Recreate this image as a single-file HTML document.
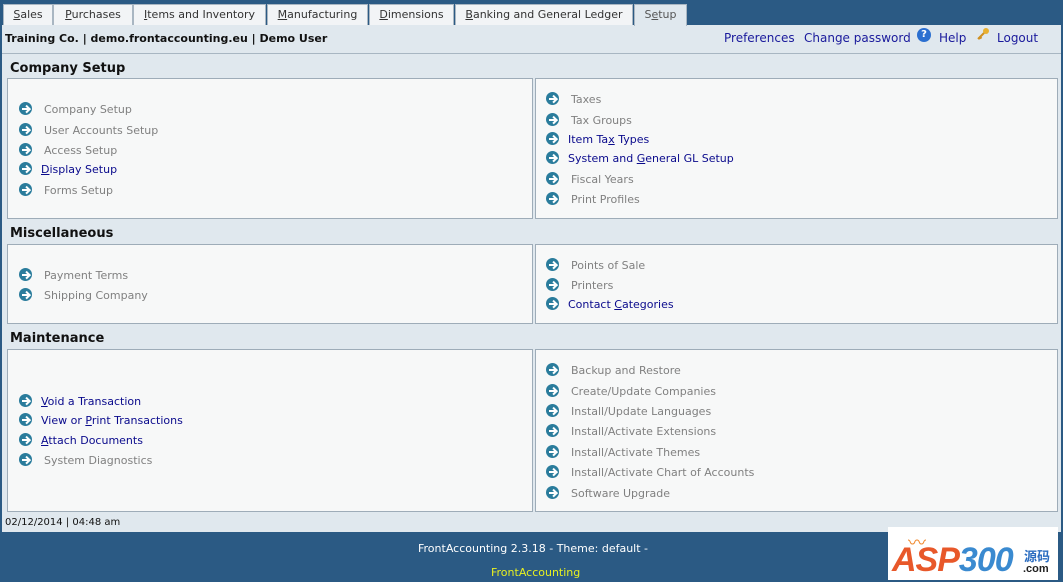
<!DOCTYPE html>
<html><head><meta charset="utf-8"><style>
body{margin:0;width:1063px;height:582px;background:#2b5a84;position:relative;overflow:hidden;font-family:"DejaVu Sans","Liberation Sans",sans-serif;font-size:11px}
.a{position:absolute;white-space:nowrap}
.tab{position:absolute;top:4px;height:21px;background:#f2f4f6;border:1px solid #a9b6c2;border-bottom:none;box-sizing:border-box;text-align:center;line-height:20px;color:#333;font-size:11px}
.tab.on{background:#e0e8ee;color:#555;height:22px}
#panel{position:absolute;left:2px;top:25px;width:1059px;height:507px;background:#e0e8ee}
.box{position:absolute;background:#f7f8f8;border:1px solid #9eacb8;box-sizing:border-box}
.h{position:absolute;left:10px;font-weight:bold;font-size:13px;color:#111}
.it{position:absolute;white-space:nowrap;color:#808080;font-size:11px;line-height:14px;margin-top:1px}
.it.l{color:#0a0a8c}
.ic{position:absolute;width:13px;height:13px;border-radius:50%;background:#2a7c9c}
.ic:after{content:"";position:absolute;left:3px;top:5.5px;width:6px;height:2px;background:#fff}
.ic:before{content:"";position:absolute;left:4.5px;top:3.5px;width:3.5px;height:3.5px;border-top:2px solid #fff;border-right:2px solid #fff;transform:rotate(45deg)}
u{text-decoration:underline}
</style></head><body>
<div id="panel"></div>
<div class="tab" style="left:3px;width:50px"><u>S</u>ales</div>
<div class="tab" style="left:53px;width:80px"><u>P</u>urchases</div>
<div class="tab" style="left:133px;width:133px"><u>I</u>tems and Inventory</div>
<div class="tab" style="left:267px;width:101px"><u>M</u>anufacturing</div>
<div class="tab" style="left:369px;width:85px"><u>D</u>imensions</div>
<div class="tab" style="left:455px;width:178px"><u>B</u>anking and General Ledger</div>
<div class="tab on" style="left:634px;width:53px">S<u>e</u>tup</div>

<div class="a" style="left:5px;top:32px;font-weight:bold;font-size:11px;color:#111">Training Co. | demo.frontaccounting.eu | Demo User</div>
<div class="a" style="left:724px;top:31px;color:#1a1a9c;font-size:12px">Preferences</div>
<div class="a" style="left:804px;top:31px;color:#1a1a9c;font-size:12px">Change password</div>
<div class="a" style="left:917px;top:28px;width:14px;height:14px;border-radius:50%;background:#2b6fd0;color:#fff;font-size:10px;font-weight:bold;text-align:center;line-height:14px">?</div>
<div class="a" style="left:939px;top:31px;color:#1a1a9c;font-size:12px">Help</div>
<div class="a" style="left:976px;top:27px;width:14px;height:14px">
<svg width="14" height="14" viewBox="0 0 14 14"><circle cx="10" cy="4" r="3" fill="#e8b030"/><path d="M8 6 L2 12 M4 10 L5.5 11.5 M3 11 L4 12" stroke="#d09020" stroke-width="2" fill="none"/></svg></div>
<div class="a" style="left:997px;top:31px;color:#1a1a9c;font-size:12px">Logout</div>
<div class="a" style="left:2px;top:53px;width:1059px;height:1px;background:#a8b6c2"></div>

<div class="h" style="top:61px">Company Setup</div>
<div class="box" style="left:7px;top:78px;width:526px;height:141px"></div>
<div class="box" style="left:535px;top:78px;width:523px;height:141px"></div>
<div class="h" style="top:226px">Miscellaneous</div>
<div class="box" style="left:7px;top:244px;width:526px;height:80px"></div>
<div class="box" style="left:535px;top:244px;width:523px;height:80px"></div>
<div class="h" style="top:331px">Maintenance</div>
<div class="box" style="left:7px;top:349px;width:526px;height:163px"></div>
<div class="box" style="left:535px;top:349px;width:523px;height:163px"></div>

<div class="ic" style="left:19px;top:102px"></div><div class="it" style="left:44px;top:102px">Company Setup</div>
<div class="ic" style="left:19px;top:123px"></div><div class="it" style="left:44px;top:123px">User Accounts Setup</div>
<div class="ic" style="left:19px;top:143px"></div><div class="it" style="left:44px;top:143px">Access Setup</div>
<div class="ic" style="left:19px;top:162px"></div><div class="it l" style="left:41px;top:162px"><u>D</u>isplay Setup</div>
<div class="ic" style="left:19px;top:183px"></div><div class="it" style="left:44px;top:183px">Forms Setup</div>

<div class="ic" style="left:546px;top:92px"></div><div class="it" style="left:571px;top:92px">Taxes</div>
<div class="ic" style="left:546px;top:113px"></div><div class="it" style="left:571px;top:113px">Tax Groups</div>
<div class="ic" style="left:546px;top:132px"></div><div class="it l" style="left:568px;top:132px">Item Ta<u>x</u> Types</div>
<div class="ic" style="left:546px;top:151px"></div><div class="it l" style="left:568px;top:151px">System and <u>G</u>eneral GL Setup</div>
<div class="ic" style="left:546px;top:172px"></div><div class="it" style="left:571px;top:172px">Fiscal Years</div>
<div class="ic" style="left:546px;top:192px"></div><div class="it" style="left:571px;top:192px">Print Profiles</div>

<div class="ic" style="left:19px;top:268px"></div><div class="it" style="left:44px;top:268px">Payment Terms</div>
<div class="ic" style="left:19px;top:288px"></div><div class="it" style="left:44px;top:288px">Shipping Company</div>
<div class="ic" style="left:546px;top:258px"></div><div class="it" style="left:571px;top:258px">Points of Sale</div>
<div class="ic" style="left:546px;top:278px"></div><div class="it" style="left:571px;top:278px">Printers</div>
<div class="ic" style="left:546px;top:297px"></div><div class="it l" style="left:568px;top:297px">Contact <u>C</u>ategories</div>

<div class="ic" style="left:19px;top:394px"></div><div class="it l" style="left:41px;top:394px"><u>V</u>oid a Transaction</div>
<div class="ic" style="left:19px;top:413px"></div><div class="it l" style="left:41px;top:413px">View or <u>P</u>rint Transactions</div>
<div class="ic" style="left:19px;top:433px"></div><div class="it l" style="left:41px;top:433px"><u>A</u>ttach Documents</div>
<div class="ic" style="left:19px;top:453px"></div><div class="it" style="left:44px;top:453px">System Diagnostics</div>

<div class="ic" style="left:546px;top:363px"></div><div class="it" style="left:571px;top:363px">Backup and Restore</div>
<div class="ic" style="left:546px;top:384px"></div><div class="it" style="left:571px;top:384px">Create/Update Companies</div>
<div class="ic" style="left:546px;top:404px"></div><div class="it" style="left:571px;top:404px">Install/Update Languages</div>
<div class="ic" style="left:546px;top:424px"></div><div class="it" style="left:571px;top:424px">Install/Activate Extensions</div>
<div class="ic" style="left:546px;top:445px"></div><div class="it" style="left:571px;top:445px">Install/Activate Themes</div>
<div class="ic" style="left:546px;top:465px"></div><div class="it" style="left:571px;top:465px">Install/Activate Chart of Accounts</div>
<div class="ic" style="left:546px;top:486px"></div><div class="it" style="left:571px;top:486px">Software Upgrade</div>

<div class="a" style="left:5px;top:517px;font-size:10px;color:#111">02/12/2014 | 04:48 am</div>
<div class="a" style="left:418px;top:542px;color:#fff;font-size:11px">FrontAccounting 2.3.18 - Theme: default -</div>
<div class="a" style="left:491px;top:566px;color:#e8f020;font-size:11px">FrontAccounting</div>

<div class="a" style="left:888px;top:527px;width:170px;height:53px;background:#fff"></div>
<div class="a" style="left:892px;top:541px;font-family:'Liberation Sans',sans-serif;font-weight:bold;font-style:italic;font-size:34px;color:#e8582a;letter-spacing:-1px">ASP<span style="color:#3a8ad0">300</span></div>
<div class="a" style="left:908px;top:529px;font-size:18px;color:#f08a30">〰</div>
<div class="a" style="left:1024px;top:546px;font-family:'Noto Sans CJK SC',sans-serif;font-weight:bold;font-size:13px;color:#2a6cc0">源码</div>
<div class="a" style="left:1023px;top:563px;font-family:'Liberation Sans',sans-serif;font-weight:bold;font-size:11px;color:#222">.com</div>
</body></html>
